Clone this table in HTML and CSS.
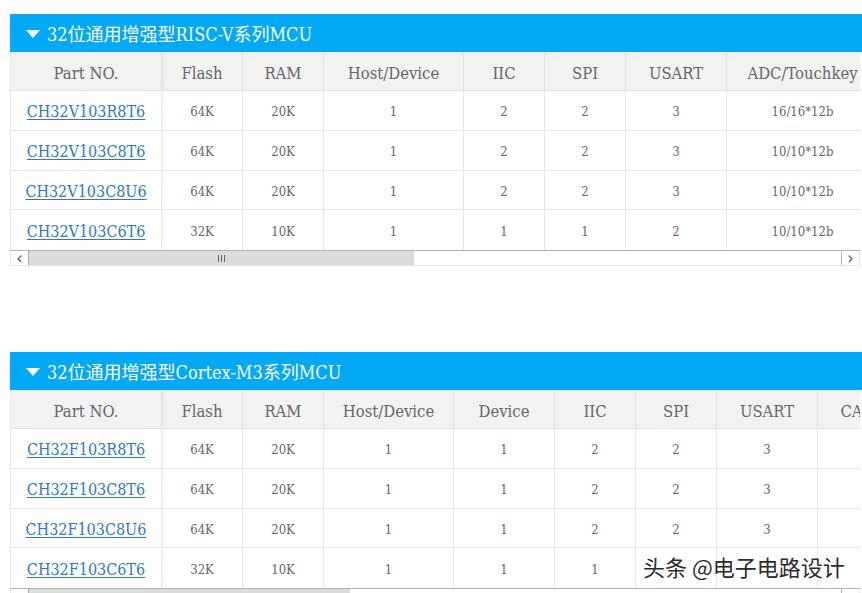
FILE: index.html
```html
<!DOCTYPE html>
<html lang="zh">
<head>
<meta charset="utf-8">
<title>MCU</title>
<link rel="stylesheet" href="styles.css">
</head>
<body>
<div class="page">
  <section class="sec">
    <div class="bar"><span class="tri"></span><span class="bar-text">32位通用增强型RISC-V系列MCU</span></div>
    <div class="wrap">
      <table class="tbl">
        <colgroup><col class="c152"><col class="c81"><col class="c81"><col class="c140"><col class="c81"><col class="c81"><col class="c101"><col class="c152"></colgroup>
        <thead>
          <tr><th class="first">Part NO.</th><th>Flash</th><th>RAM</th><th>Host/Device</th><th>IIC</th><th>SPI</th><th>USART</th><th>ADC/Touchkey</th></tr>
        </thead>
        <tbody>
          <tr><td class="first"><a href="#">CH32V103R8T6</a></td><td>64K</td><td>20K</td><td>1</td><td>2</td><td>2</td><td>3</td><td>16/16*12b</td></tr>
          <tr><td class="first"><a href="#">CH32V103C8T6</a></td><td>64K</td><td>20K</td><td>1</td><td>2</td><td>2</td><td>3</td><td>10/10*12b</td></tr>
          <tr><td class="first"><a href="#">CH32V103C8U6</a></td><td>64K</td><td>20K</td><td>1</td><td>2</td><td>2</td><td>3</td><td>10/10*12b</td></tr>
          <tr><td class="first"><a href="#">CH32V103C6T6</a></td><td>32K</td><td>10K</td><td>1</td><td>1</td><td>1</td><td>2</td><td>10/10*12b</td></tr>
        </tbody>
      </table>
    </div>
    <div class="sb">
      <div class="sb-btn">&#8249;</div>
      <div class="sb-thumb t1"><span class="grip"></span></div>
      <div class="sb-track"></div>
      <div class="sb-btn right">&#8250;</div>
    </div>
  </section>

  <section class="sec sec2">
    <div class="bar"><span class="tri"></span><span class="bar-text">32位通用增强型Cortex-M3系列MCU</span></div>
    <div class="wrap">
      <table class="tbl">
        <colgroup><col class="c152"><col class="c81"><col class="c81"><col class="c130"><col class="c101"><col class="c81"><col class="c81"><col class="c101"><col class="c81"></colgroup>
        <thead>
          <tr><th class="first">Part NO.</th><th>Flash</th><th>RAM</th><th>Host/Device</th><th>Device</th><th>IIC</th><th>SPI</th><th>USART</th><th>CAN</th></tr>
        </thead>
        <tbody>
          <tr><td class="first"><a href="#">CH32F103R8T6</a></td><td>64K</td><td>20K</td><td>1</td><td>1</td><td>2</td><td>2</td><td>3</td><td></td></tr>
          <tr><td class="first"><a href="#">CH32F103C8T6</a></td><td>64K</td><td>20K</td><td>1</td><td>1</td><td>2</td><td>2</td><td>3</td><td></td></tr>
          <tr><td class="first"><a href="#">CH32F103C8U6</a></td><td>64K</td><td>20K</td><td>1</td><td>1</td><td>2</td><td>2</td><td>3</td><td></td></tr>
          <tr><td class="first"><a href="#">CH32F103C6T6</a></td><td>32K</td><td>10K</td><td>1</td><td>1</td><td>1</td><td></td><td></td><td></td></tr>
        </tbody>
      </table>
    </div>
    <div class="sb">
      <div class="sb-btn">&#8249;</div>
      <div class="sb-thumb t2"></div>
      <div class="sb-track"></div>
      <div class="sb-btn right">&#8250;</div>
    </div>
  </section>

  <div class="watermark">头条 @电子电路设计</div>
</div>
</body>
</html>
```

FILE: styles.css
```css
html, body {
  margin: 0;
  padding: 0;
  background: #fff;
}
body {
  font-family: "DejaVu Serif", "Noto Sans CJK SC", serif;
  font-stretch: condensed;
  overflow: hidden;
}
.page {
  position: relative;
  padding: 14px 0 0 10px;
  height: 579px;
  overflow: hidden;
}
.sec {
  width: 852px;
}
.sec2 {
  margin-top: 86px;
}
.bar {
  height: 38px;
  background: #03a9f4;
  color: #fff;
  display: flex;
  align-items: center;
  padding-left: 16px;
  font-size: 18px;
}
.tri {
  width: 0;
  height: 0;
  border-left: 7.5px solid transparent;
  border-right: 7.5px solid transparent;
  border-top: 8px solid #fff;
  margin-right: 7px;
  margin-top: 1px;
}
.bar-text {
  font-family: "DejaVu Serif", "Noto Sans CJK SC", serif;
  line-height: 38px;
  padding-top: 3px;
}
.wrap {
  width: 850px;
  overflow: hidden;
}
.tbl {
  border-collapse: separate;
  border-spacing: 0;
  table-layout: fixed;
  width: max-content;
}
.c152 { width: 152px; }
.c81 { width: 81px; }
.c101 { width: 101px; }
.c130 { width: 130px; }
.c140 { width: 140px; }
.tbl th {
  height: 39px;
  box-sizing: border-box;
  background: #f2f2f2;
  color: #666;
  font-weight: normal;
  font-size: 16.5px;
  border-right: 1px solid #e2e2e2;
  border-bottom: 1px solid #e2e2e2;
  padding: 5px 0 0;
  text-align: center;
  white-space: nowrap;
}
.tbl td {
  height: 39.75px;
  color: #666;
  font-size: 13px;
  border-right: 1px solid #e6e6e6;
  border-bottom: 1px solid #e6e6e6;
  padding: 3px 0 0;
  box-sizing: border-box;
  text-align: center;
  white-space: nowrap;
}
.tbl tbody tr:last-child td {
  border-bottom: none;
}
.tbl .first {
  border-left: 1px solid #e6e6e6;
  box-shadow: 3px 0 4px -2px rgba(0, 0, 0, 0.08);
  position: relative;
}
.tbl td.first {
  background: #fff;
}
.tbl a {
  color: #2b7ac4;
  font-size: 16px;
  text-decoration: underline;
  text-underline-offset: 2px;
}
.sb {
  width: 850px;
  height: 16px;
  display: flex;
  border-top: 1px solid #b4b4b4;
  border-bottom: 1px solid #e6e6e6;
  box-sizing: border-box;
  background: #fff;
}
.sb-btn {
  width: 17px;
  flex: none;
  font-family: "DejaVu Sans", sans-serif;
  font-size: 18px;
  line-height: 13px;
  color: #555;
  text-align: center;
  border-left: 1px solid #e6e6e6;
}
.sb-btn.right {
  border-left: 1px solid #b4b4b4;
  border-right: 1px solid #e6e6e6;
}
.sb-thumb {
  flex: none;
  background: #dcdcdc;
  border-left: 1px solid #a8a8a8;
  display: flex;
  align-items: center;
  justify-content: center;
  box-sizing: border-box;
}
.t1 { width: 386px; }
.t2 { width: 322px; }
.grip {
  width: 7px;
  height: 7px;
  background: repeating-linear-gradient(90deg, #666 0 1px, transparent 1px 3px);
}
.sb-track {
  flex: 1;
}
.watermark {
  position: absolute;
  left: 643px;
  top: 550px;
  font-family: "Noto Sans CJK SC", sans-serif;
  font-stretch: normal;
  font-size: 22px;
  color: #2b2b2b;
  text-shadow: 0 0 2px #fff, 0 0 2px #fff, 1px 1px 0 #fff, -1px -1px 0 #fff;
}
```
